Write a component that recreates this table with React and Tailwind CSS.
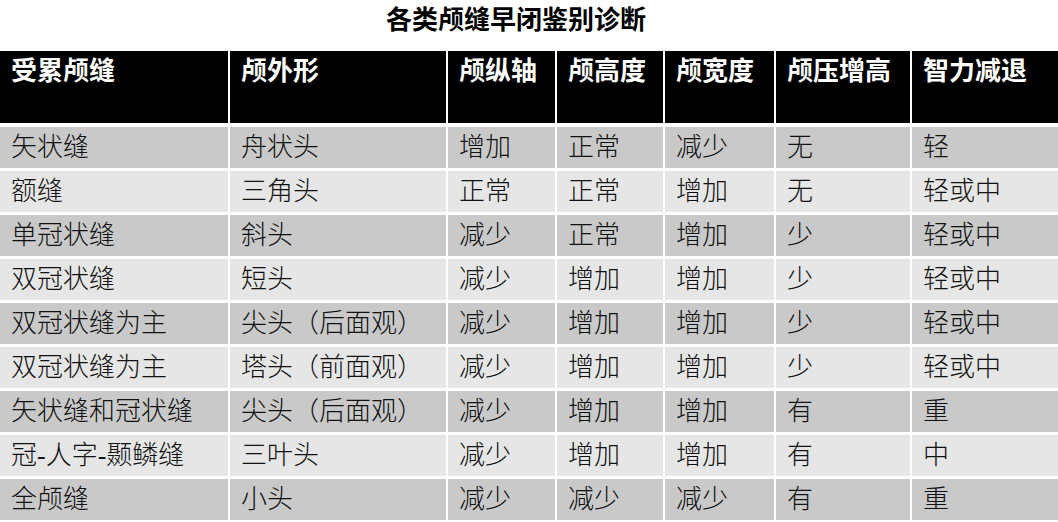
import React from "react";

const headers = ["受累颅缝", "颅外形", "颅纵轴", "颅高度", "颅宽度", "颅压增高", "智力减退"];

const rows = [
  ["矢状缝", "舟状头", "增加", "正常", "减少", "无", "轻"],
  ["额缝", "三角头", "正常", "正常", "增加", "无", "轻或中"],
  ["单冠状缝", "斜头", "减少", "正常", "增加", "少", "轻或中"],
  ["双冠状缝", "短头", "减少", "增加", "增加", "少", "轻或中"],
  ["双冠状缝为主", "尖头（后面观）", "减少", "增加", "增加", "少", "轻或中"],
  ["双冠状缝为主", "塔头（前面观）", "减少", "增加", "增加", "少", "轻或中"],
  ["矢状缝和冠状缝", "尖头（后面观）", "减少", "增加", "增加", "有", "重"],
  ["冠-人字-颞鳞缝", "三叶头", "减少", "增加", "增加", "有", "中"],
  ["全颅缝", "小头", "减少", "减少", "减少", "有", "重"],
];

const cols = "grid grid-cols-[228px_216px_107px_106px_109px_134px_146px] gap-x-[2px]";

const App = () => {
  return (
    <div className="w-[1058px] h-[522px] overflow-hidden bg-white font-['Liberation_Serif','Noto_Sans_CJK_SC',serif]">
      <div className="h-[51px] flex items-center justify-center pb-[9px] pr-[26px]">
        <h1 className="text-[26px] font-bold text-black leading-none">各类颅缝早闭鉴别诊断</h1>
      </div>

      <div className={`${cols} h-[72px] mb-[4px]`}>
        {headers.map((h, i) => (
          <div key={i} className="bg-black text-white text-[26px] font-bold leading-none pl-[11px] pt-[8px] whitespace-nowrap">
            {h}
          </div>
        ))}
      </div>

      <div className="flex flex-col gap-[3px]">
        {rows.map((r, ri) => (
          <div key={ri} className={`${cols} h-[41px]`}>
            {r.map((c, ci) => (
              <div
                key={ci}
                className={`flex items-center pl-[11px] text-[26px] font-light text-[#111] leading-none whitespace-nowrap ${
                  ri % 2 == 0 ? "bg-[#c9c9c9]" : "bg-[#e6e6e6]"
                }`}
              >
                {c}
              </div>
            ))}
          </div>
        ))}
      </div>
    </div>
  );
};

export default App;
